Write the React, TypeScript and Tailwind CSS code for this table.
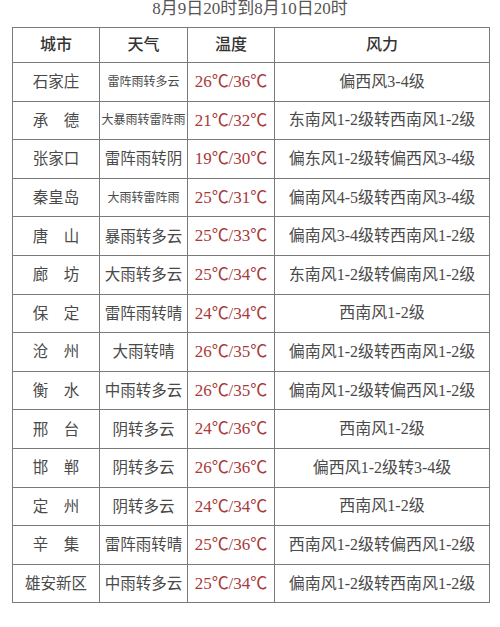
const rows: [string, string, boolean, string, string][] = [
  ['石家庄', '雷阵雨转多云', true, '26℃/36℃', '偏西风3-4级'],
  ['承　德', '大暴雨转雷阵雨', true, '21℃/32℃', '东南风1-2级转西南风1-2级'],
  ['张家口', '雷阵雨转阴', false, '19℃/30℃', '偏东风1-2级转偏西风3-4级'],
  ['秦皇岛', '大雨转雷阵雨', true, '25℃/31℃', '偏南风4-5级转西南风3-4级'],
  ['唐　山', '暴雨转多云', false, '25℃/33℃', '偏南风3-4级转西南风1-2级'],
  ['廊　坊', '大雨转多云', false, '25℃/34℃', '东南风1-2级转偏南风1-2级'],
  ['保　定', '雷阵雨转晴', false, '24℃/34℃', '西南风1-2级'],
  ['沧　州', '大雨转晴', false, '26℃/35℃', '偏南风1-2级转西南风1-2级'],
  ['衡　水', '中雨转多云', false, '26℃/35℃', '偏南风1-2级转偏西风1-2级'],
  ['邢　台', '阴转多云', false, '24℃/36℃', '西南风1-2级'],
  ['邯　郸', '阴转多云', false, '26℃/36℃', '偏西风1-2级转3-4级'],
  ['定　州', '阴转多云', false, '24℃/34℃', '西南风1-2级'],
  ['辛　集', '雷阵雨转晴', false, '25℃/36℃', '西南风1-2级转偏西风1-2级'],
  ['雄安新区', '中雨转多云', false, '25℃/34℃', '偏南风1-2级转西南风1-2级'],
]

const font = { fontFamily: '"Liberation Serif", "Noto Sans CJK SC", serif' }

export default function App() {
  return (
    <div className="w-[500px] h-[627px] bg-white text-[#4a4a4a]" style={font}>
      <div className="h-[27px] text-center text-[17px] leading-[18px] text-[#555]">
        8月9日20时到8月10日20时
      </div>
      <table className="ml-[12px] w-[477px] border-collapse table-fixed">
        <colgroup>
          <col className="w-[87px]" />
          <col className="w-[88px]" />
          <col className="w-[87px]" />
          <col className="w-[215px]" />
        </colgroup>
        <thead>
          <tr className="h-[35px] text-[16px] text-[#333]">
            <th className="border border-[#7a7a7a] font-medium">城市</th>
            <th className="border border-[#7a7a7a] font-medium">天气</th>
            <th className="border border-[#7a7a7a] font-medium">温度</th>
            <th className="border border-[#7a7a7a] font-medium">风力</th>
          </tr>
        </thead>
        <tbody>
          {rows.map(([city, weather, small, temp, wind]) => (
            <tr key={city} className="h-[38.6px]">
              <td className="border border-[#7a7a7a] text-center text-[15.5px] p-0 whitespace-nowrap">{city}</td>
              <td
                className={`border border-[#7a7a7a] text-center p-0 whitespace-nowrap ${small ? 'text-[12px]' : 'text-[15.5px]'}`}
              >
                {weather}
              </td>
              <td className="border border-[#7a7a7a] text-center text-[17px] text-[#a83a3a] p-0 whitespace-nowrap">
                {temp}
              </td>
              <td className="border border-[#7a7a7a] text-center text-[16px] p-0 whitespace-nowrap">{wind}</td>
            </tr>
          ))}
        </tbody>
      </table>
    </div>
  )
}
